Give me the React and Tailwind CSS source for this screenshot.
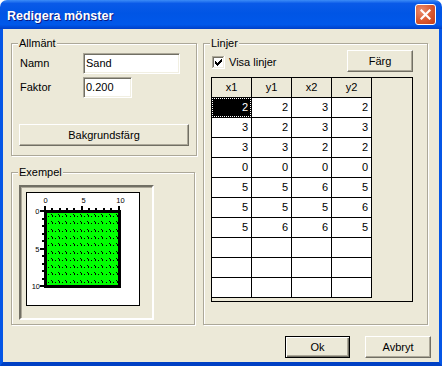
import React from 'react';

const rows = [
    [2, 2, 3, 2],
    [3, 2, 3, 3],
    [3, 3, 2, 2],
    [0, 0, 0, 0],
    [5, 5, 6, 5],
    [5, 5, 5, 6],
    [5, 6, 6, 5],
    [null, null, null, null],
    [null, null, null, null],
    [null, null, null, null],
];

function Group({ label, className = '', children }) {
    return (
        <fieldset className={`border border-[#aca899] shadow-[inset_1px_1px_#fff,1px_1px_#fff] ${className}`}>
            <legend className="ml-[6px] px-[1px] leading-[13px] bg-[#ece9d8]">{label}</legend>
            {children}
        </fieldset>
    );
}

function Btn({ children, className = '', isDefault }) {
    if (isDefault) {
        return (
            <button className={`h-[22px] border border-black bg-[#ece9d8] leading-none shadow-[inset_1px_1px_#fff,inset_-1px_-1px_#716f64,inset_-2px_-2px_#aca899] ${className}`}>
                {children}
            </button>
        );
    }
    return (
        <button className={`h-[22px] border border-t-white border-l-white border-r-[#716f64] border-b-[#716f64] bg-[#ece9d8] leading-none shadow-[inset_-1px_-1px_#aca899] ${className}`}>
            {children}
        </button>
    );
}

function TextBox({ value, className = '' }) {
    return (
        <div className={`h-[21px] flex items-center pl-[1px] bg-white border border-t-[#aca899] border-l-[#aca899] border-r-white border-b-white shadow-[inset_1px_1px_#716f64,inset_-1px_-1px_#f1efe2] ${className}`}>
            <span className="pl-[1px]">{value}</span>
        </div>
    );
}

function CheckBox() {
    const check = [
        [3, 5], [4, 6], [5, 7], [6, 6], [7, 5], [8, 4], [9, 3],
    ];
    return (
        <svg width="13" height="13" viewBox="0 0 13 13" className="shrink-0">
            <rect x="0" y="0" width="13" height="13" fill="#fff" />
            <rect x="0" y="0" width="12" height="1" fill="#aca899" />
            <rect x="0" y="0" width="1" height="12" fill="#aca899" />
            <rect x="1" y="1" width="10" height="1" fill="#716f64" />
            <rect x="1" y="1" width="1" height="10" fill="#716f64" />
            <rect x="1" y="11" width="11" height="1" fill="#f1efe2" />
            <rect x="11" y="1" width="1" height="11" fill="#f1efe2" />
            {check.map(([x, y]) => (
                <rect key={x} x={x} y={y} width="1" height="3" fill="#000" />
            ))}
        </svg>
    );
}

function Preview() {
    const marks = [];
    for (let i = 0; i < 10; i++) {
        for (let j = 0; j < 10; j++) {
            const x = 20 + Math.round(i * 7.2);
            const y = 20 + Math.round(j * 7.3);
            marks.push(
                <g key={`${i}-${j}`} fill="#000">
                    <rect x={x + 1} y={y + 3} width="1" height="1" />
                    <rect x={x + 4} y={y + 1} width="1" height="1" />
                    <rect x={x + 5} y={y + 2} width="1" height="2" />
                </g>
            );
        }
    }
    const ticks = [];
    for (let k = 0; k <= 10; k++) {
        const major = k % 5 === 0;
        const tx = Math.round(18 + k * 7.35);
        const ty = Math.round(18 + k * 7.5);
        ticks.push(<rect key={`t${k}`} x={tx - 1} y={major ? 13 : 15} width="2" height={major ? 4 : 2} fill="#000" />);
        ticks.push(<rect key={`l${k}`} x={major ? 13 : 15} y={ty - 1} width={major ? 4 : 2} height="2" fill="#000" />);
    }
    return (
        <svg width="112" height="112" viewBox="0 0 112 112" className="block">
            <rect x="17" y="17" width="77" height="78" fill="#000" />
            <rect x="20" y="20" width="71" height="72" fill="#00ff00" />
            {marks}
            {ticks}
            <g fontSize="7.5" fontFamily="'Liberation Sans', Arial, sans-serif" fill="#000">
                <text x="18.5" y="10" textAnchor="middle">0</text>
                <text x="56.5" y="10" textAnchor="middle">5</text>
                <text x="93.5" y="10" textAnchor="middle">10</text>
                <text x="12.5" y="21" textAnchor="end">0</text>
                <text x="12.5" y="59" textAnchor="end">5</text>
                <text x="13" y="96" textAnchor="end">10</text>
            </g>
        </svg>
    );
}

function LineGrid() {
    return (
        <div className="w-[202px] h-[225px] border border-black bg-[#ece9d8]">
            <div className="flex">
                {['x1', 'y1', 'x2', 'y2'].map(h => (
                    <div key={h} className="w-[40px] h-[20px] border-r border-b border-black flex items-center justify-center">
                        {h}
                    </div>
                ))}
            </div>
            {rows.map((r, ri) => (
                <div key={ri} className="flex">
                    {r.map((v, ci) => {
                        const selected = ri === 0 && ci === 0;
                        return (
                            <div key={ci} className={`w-[40px] h-[20px] border-r border-b border-black ${selected ? 'bg-black text-white' : 'bg-white'}`}>
                                <div className={`h-full flex items-center justify-end pr-[2px] border ${selected ? 'border-dotted border-white' : 'border-transparent'}`}>
                                    {v}
                                </div>
                            </div>
                        );
                    })}
                </div>
            ))}
        </div>
    );
}

export default function App() {
    return (
        <div className="w-[442px] h-[366px] flex flex-col bg-white text-black text-[11px] font-['Liberation_Sans',Arial,sans-serif]">
            {/* Title bar */}
            <div className="h-[29px] shrink-0 flex items-start justify-between rounded-t-[7px] bg-[linear-gradient(180deg,#3c8cf7_0%,#0a5ae8_12%,#0055e5_45%,#0058ea_85%,#0040c8_100%)]">
                <span className="mt-[9px] ml-[7px] leading-[14px] text-[12.5px] font-bold text-white [text-shadow:1px_1px_#0a1883]">
                    Redigera mönster
                </span>
                <div className="mt-[4px] mr-[6px] w-[21px] h-[21px] rounded-[3px] border border-white bg-[radial-gradient(circle_at_30%_30%,#ea8d6e_0%,#d9582f_55%,#c23c16_100%)] flex items-center justify-center">
                    <svg width="11" height="11" viewBox="0 0 11 11">
                        <path d="M1.5 1.5 L9.5 9.5 M9.5 1.5 L1.5 9.5" stroke="#fff" strokeWidth="2.2" strokeLinecap="square" />
                    </svg>
                </div>
            </div>

            {/* Client area */}
            <div className="flex-1 flex flex-col bg-[#ece9d8] border-l-[3px] border-r-[3px] border-b-[4px] border-l-[#0556e6] border-r-[#0556e6] border-b-[#0040c4] pt-[8px] pl-[8px]">
                <div className="flex gap-[8px] h-[288px]">
                    <div className="w-[184px] flex flex-col gap-[10px]">
                        <Group label="Allmänt" className="h-[119px]">
                            <div className="px-[7px]">
                                <div className="mt-[3px] flex flex-col gap-[3px]">
                                    <div className="flex items-center">
                                        <span className="w-[64px] pl-[1px]">Namn</span>
                                        <TextBox value="Sand" className="w-[97px]" />
                                    </div>
                                    <div className="flex items-center">
                                        <span className="w-[64px] pl-[1px]">Faktor</span>
                                        <TextBox value="0.200" className="w-[49px]" />
                                    </div>
                                </div>
                                <Btn className="mt-[26px] w-[170px]">Bakgrundsfärg</Btn>
                            </div>
                        </Group>
                        <Group label="Exempel" className="h-[159px]">
                            <div className="px-[7px] pt-[6px]">
                                <div className="w-[135px] h-[135px] p-[5px] border-2 border-t-[#716f64] border-l-[#716f64] border-r-white border-b-white shadow-[inset_1px_1px_#aca899]">
                                    <div className="w-[114px] h-[114px] border border-black bg-white">
                                        <Preview />
                                    </div>
                                </div>
                            </div>
                        </Group>
                    </div>

                    <Group label="Linjer" className="w-[225px] h-[288px]">
                        <div className="pl-[7px]">
                            <div className="w-[202px] h-[22px] flex items-center justify-between">
                                <label className="flex items-center gap-[4px] ml-[1px] mt-[2px]">
                                    <CheckBox />
                                    <span>Visa linjer</span>
                                </label>
                                <Btn className="w-[66px]">Färg</Btn>
                            </div>
                            <div className="mt-[5px]">
                                <LineGrid />
                            </div>
                        </div>
                    </Group>
                </div>

                <div className="mt-[11px] flex justify-end gap-[15px] pr-[8px]">
                    <Btn isDefault className="w-[65px]">Ok</Btn>
                    <Btn className="w-[66px]">Avbryt</Btn>
                </div>
            </div>
        </div>
    );
}
